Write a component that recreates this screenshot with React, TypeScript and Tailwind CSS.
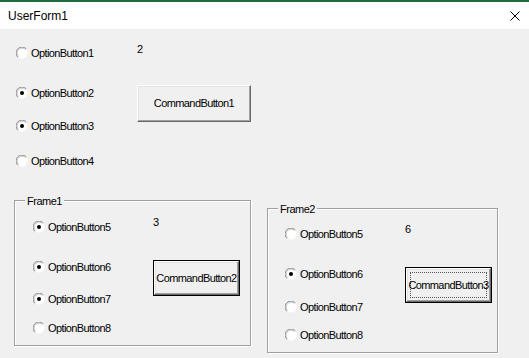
import { ReactNode } from "react";

const font = { fontFamily: '"Liberation Sans", Arial, sans-serif' };

function Radio({ checked, label }: { checked?: boolean; label: string }) {
  return (
    <div className="flex items-center h-[14px] gap-[3px]">
      <svg width="12" height="12" viewBox="0 0 12 12" className="flex-shrink-0">
        <circle cx="6" cy="6" r="5.5" fill="#ffffff" />
        <path d="M1.8 10.2 A5.5 5.5 0 0 1 10.2 1.8" fill="none" stroke="#8a8a8a" strokeWidth="1" />
        <path d="M2.6 9.4 A4.5 4.5 0 0 1 9.4 2.6" fill="none" stroke="#c8c8c8" strokeWidth="1" />
        {checked && <circle cx="6" cy="6" r="2" fill="#000000" />}
      </svg>
      <span className="text-[11px] tracking-[-0.6px] text-black leading-none">{label}</span>
    </div>
  );
}

function CmdButton({
  children,
  w,
  h,
  variant = "plain",
}: {
  children: ReactNode;
  w: string;
  h: string;
  variant?: "plain" | "default" | "focus";
}) {
  const inner = (
    <div className="w-full h-full bg-[#f0f0f0] border border-t-[#ffffff] border-l-[#ffffff] border-r-[#696969] border-b-[#696969] shadow-[inset_-1px_-1px_0_#a0a0a0,inset_1px_1px_0_#e3e3e3] flex items-center justify-center">
      {variant === "focus" ? (
        <div className="w-[calc(100%-6px)] h-[calc(100%-6px)] border border-dotted border-[#555] flex items-center justify-center">
          <span className="text-[11px] tracking-[-0.6px] text-black whitespace-nowrap">{children}</span>
        </div>
      ) : (
        <span className="text-[11px] tracking-[-0.6px] text-black whitespace-nowrap">{children}</span>
      )}
    </div>
  );
  if (variant === "plain") {
    return <div className={`${w} ${h}`}>{inner}</div>;
  }
  return <div className={`${w} ${h} border border-black`}>{inner}</div>;
}

function Frame({ title, children, className }: { title: string; children: ReactNode; className: string }) {
  return (
    <div className={`relative border border-[#a0a0a0] shadow-[inset_1px_1px_0_#ffffff,1px_1px_0_#ffffff] ${className}`}>
      <span className="absolute left-[10px] -top-[7px] px-[2px] bg-[#f0f0f0] text-[11px] tracking-[-0.5px] leading-[14px] text-black">
        {title}
      </span>
      {children}
    </div>
  );
}

export default function App() {
  return (
    <div className="w-[529px] h-[358px] bg-[#f0f0f0] overflow-hidden flex flex-col" style={font}>
      <div className="h-[2px] bg-[#1e6b3f]" />
      <div className="h-[27px] bg-white flex items-center justify-between pl-[8px] pr-[8px]">
        <span className="text-[12px] text-black">UserForm1</span>
        <svg width="10" height="10" viewBox="0 0 10 10" className="mr-[1px]">
          <path d="M0.5 0.5 L9.5 9.5 M9.5 0.5 L0.5 9.5" stroke="#000" strokeWidth="1" />
        </svg>
      </div>

      {/* top section */}
      <div className="h-[171px] flex">
        <div className="w-[137px] pl-[16px] flex flex-col">
          <div className="mt-[17px]">
            <Radio label="OptionButton1" />
          </div>
          <div className="mt-[26px]">
            <Radio checked label="OptionButton2" />
          </div>
          <div className="mt-[19px]">
            <Radio checked label="OptionButton3" />
          </div>
          <div className="mt-[21px]">
            <Radio label="OptionButton4" />
          </div>
        </div>
        <div className="flex flex-col">
          <div className="mt-[13px] h-[14px] text-[11px] leading-[14px] text-black">2</div>
          <div className="mt-[29px]">
            <CmdButton w="w-[114px]" h="h-[37px]">
              CommandButton1
            </CmdButton>
          </div>
        </div>
      </div>

      {/* frames */}
      <div className="flex items-start">
        <Frame title="Frame1" className="ml-[14px] w-[237px] h-[146px] flex">
          <div className="w-[138px] pl-[18px] flex flex-col">
            <div className="mt-[19px]">
              <Radio checked label="OptionButton5" />
            </div>
            <div className="mt-[26px]">
              <Radio checked label="OptionButton6" />
            </div>
            <div className="mt-[18px]">
              <Radio checked label="OptionButton7" />
            </div>
            <div className="mt-[15px]">
              <Radio label="OptionButton8" />
            </div>
          </div>
          <div className="flex flex-col">
            <div className="mt-[14px] h-[14px] text-[11px] leading-[14px] text-black">3</div>
            <div className="mt-[31px]">
              <CmdButton w="w-[87px]" h="h-[36px]" variant="default">
                CommandButton2
              </CmdButton>
            </div>
          </div>
        </Frame>

        <Frame title="Frame2" className="ml-[16px] mt-[8px] w-[231px] h-[145px] flex">
          <div className="w-[137px] pl-[17px] flex flex-col">
            <div className="mt-[18px]">
              <Radio label="OptionButton5" />
            </div>
            <div className="mt-[26px]">
              <Radio checked label="OptionButton6" />
            </div>
            <div className="mt-[19px]">
              <Radio label="OptionButton7" />
            </div>
            <div className="mt-[14px]">
              <Radio label="OptionButton8" />
            </div>
          </div>
          <div className="flex flex-col">
            <div className="mt-[13px] h-[14px] text-[11px] leading-[14px] text-black">6</div>
            <div className="mt-[31px]">
              <CmdButton w="w-[87px]" h="h-[36px]" variant="focus">
                CommandButton3
              </CmdButton>
            </div>
          </div>
        </Frame>
      </div>
    </div>
  );
}
